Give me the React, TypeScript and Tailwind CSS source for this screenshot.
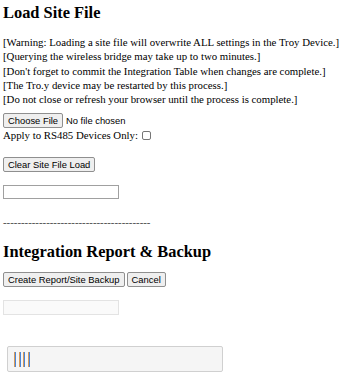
export default function App() {
  const serif = { fontFamily: '"Liberation Serif", "Times New Roman", serif' };
  const sans = { fontFamily: '"Liberation Sans", Arial, sans-serif' };
  const btn =
    "border border-[#8f8f8f] bg-[#efefef] rounded-[2px] px-[4px] h-[15px] text-[9.4px] leading-[13px] text-black";
  const stripe = (
    <span className="flex h-[15px]">
      <span className="w-[1px] h-full bg-[#d89a5a]" />
      <span className="w-[1px] h-full bg-[#4a86d8]" />
    </span>
  );
  return (
    <div className="bg-white w-[354px] h-[374px] overflow-hidden text-black px-[3px] pt-[3px]" style={serif}>
      <h2 className="text-[16.4px] font-bold leading-[19px]">Load Site File</h2>
      <div className="mt-[13px] text-[10.8px] leading-[14.3px]">
        <div>[Warning: Loading a site file will overwrite ALL settings in the Troy Device.]</div>
        <div>[Querying the wireless bridge may take up to two minutes.]</div>
        <div>[Don't forget to commit the Integration Table when changes are complete.]</div>
        <div>[The Tro.y device may be restarted by this process.]</div>
        <div>[Do not close or refresh your browser until the process is complete.]</div>
      </div>
      <div className="mt-[7px] flex items-center" style={sans}>
        <button className={btn} style={sans}>Choose File</button>
        <span className="ml-[3px] text-[9.4px] leading-[13px]">No file chosen</span>
      </div>
      <div className="flex items-center text-[10.8px] leading-[14.3px]">
        <span>Apply to RS485 Devices Only:</span>
        <span className="ml-[4px] inline-block w-[9px] h-[9px] border border-[#767676] rounded-[2px] bg-white" />
      </div>
      <div className="mt-[14px] flex">
        <button className={btn} style={sans}>Clear Site File Load</button>
      </div>
      <div className="mt-[13px] w-[116px] h-[14px] border border-[#a0a0a0] bg-white" />
      <div className="mt-[16px] text-[10.8px] leading-[14.3px] text-[#444]">-----------------------------------------</div>
      <h2 className="mt-[13px] text-[16.4px] font-bold leading-[19px]">Integration Report &amp; Backup</h2>
      <div className="mt-[11px] flex gap-[2px]">
        <button className={btn} style={sans}>Create Report/Site Backup</button>
        <button className={btn} style={sans}>Cancel</button>
      </div>
      <div className="mt-[13px] w-[116px] h-[15px] border border-[#e3e3e3] bg-[#fafafa]" />
      <div className="mt-[31px] ml-[4px] w-[216px] h-[26px] border border-[#d0d0d0] bg-[#f5f5f5] rounded-[2px] flex items-center pl-[6px] gap-[2.5px]">
        {stripe}
        {stripe}
        {stripe}
        {stripe}
      </div>
    </div>
  );
}
